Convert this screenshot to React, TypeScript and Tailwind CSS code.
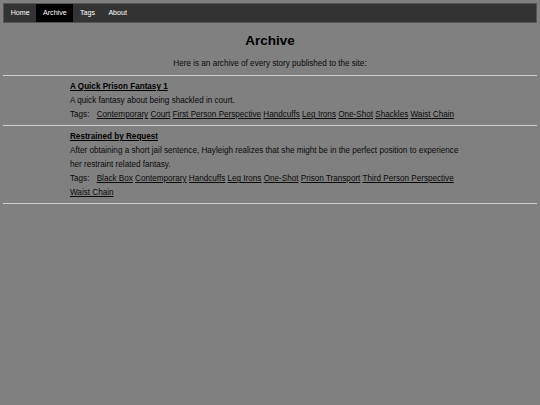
const navItems = ["Home", "Archive", "Tags", "About"];

const stories = [
  {
    title: "A Quick Prison Fantasy 1",
    summary: "A quick fantasy about being shackled in court.",
    tags: [
      "Contemporary",
      "Court",
      "First Person Perspective",
      "Handcuffs",
      "Leg Irons",
      "One-Shot",
      "Shackles",
      "Waist Chain",
    ],
  },
  {
    title: "Restrained by Request",
    summary:
      "After obtaining a short jail sentence, Hayleigh realizes that she might be in the perfect position to experience her restraint related fantasy.",
    tags: [
      "Black Box",
      "Contemporary",
      "Handcuffs",
      "Leg Irons",
      "One-Shot",
      "Prison Transport",
      "Third Person Perspective",
      "Waist Chain",
    ],
  },
];

export default function App() {
  return (
    <div
      className="min-h-screen bg-[#808080] p-[3px] text-[#0a0a0a]"
      style={{ fontFamily: '"Liberation Sans", Arial, sans-serif' }}
    >
      <nav className="flex h-[20px] border border-[#555] bg-[#333]">
        {navItems.map((item) => (
          <a
            key={item}
            href="#"
            className={`px-[6.7px] text-[7.1px] leading-[18px] text-white ${
              item === "Archive" ? "bg-black" : ""
            }`}
          >
            {item}
          </a>
        ))}
      </nav>

      <h1 className="mt-[9.5px] text-center text-[13.5px] font-bold leading-[16px] text-black">
        Archive
      </h1>
      <p className="mt-[8px] text-center text-[8.15px] leading-[14px]">
        Here is an archive of every story published to the site:
      </p>

      <div className="mt-[4.6px] h-px bg-[#cfcfcf]" />

      {stories.map((story) => (
        <div key={story.title}>
          <div className="mx-auto w-[400px] pt-[4px] pb-[3px] text-[8.15px] leading-[14px]">
            <a href="#" className="font-bold text-black underline">
              {story.title}
            </a>
            <p>{story.summary}</p>
            <p>
              <span className="mr-[5px]">Tags: </span>
              {story.tags.map((tag, i) => (
                <span key={tag}>
                  <a href="#" className="underline">
                    {tag}
                  </a>
                  {i < story.tags.length - 1 ? " " : ""}
                </span>
              ))}
            </p>
          </div>
          <div className="h-px bg-[#cfcfcf]" />
        </div>
      ))}
    </div>
  );
}
